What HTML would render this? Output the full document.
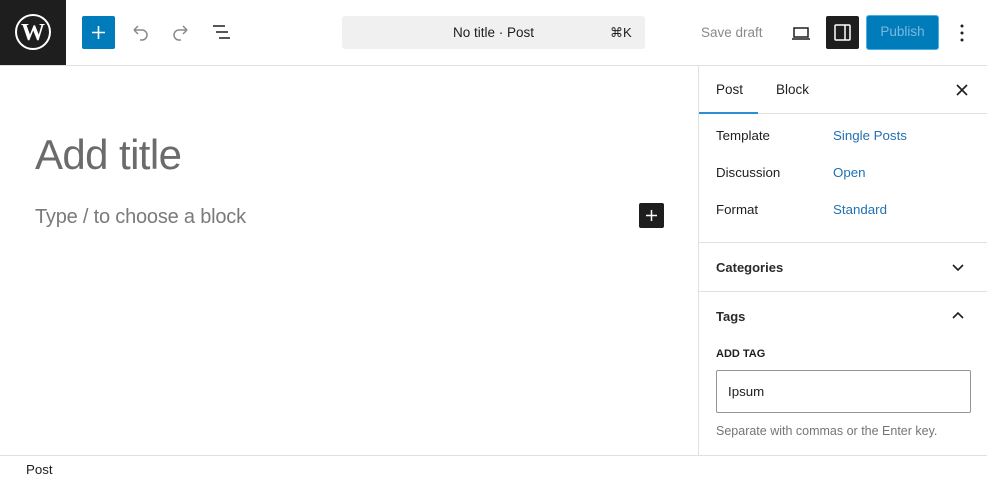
<!DOCTYPE html>
<html><head><style>
*{box-sizing:border-box;margin:0;padding:0}
body{width:987px;height:481px;overflow:hidden;background:#fff;font-family:"Liberation Sans",sans-serif;color:#1e1e1e;position:relative;font-size:13.3px}
.a{position:absolute}
.blue{color:#2271b1}
.m{font-weight:bold;color:#2a2a2a;font-size:13px}
</style></head><body>
<div class="a" style="left:0;top:0;width:66px;height:65px;background:#1e1e1e"></div>
<svg class="a" style="left:14px;top:13px" width="38" height="38" viewBox="0 0 38 38"><circle cx="19" cy="19" r="17" fill="none" stroke="#fff" stroke-width="2"/><text x="19" y="27" text-anchor="middle" font-family="Liberation Serif" font-weight="bold" font-size="24" fill="#fff">W</text></svg>
<div class="a" style="left:0;top:65px;width:987px;height:1px;background:#e0e0e0"></div>
<div class="a" style="left:82px;top:16px;width:33px;height:33px;background:#007cba;border-radius:2px"></div>
<svg class="a" style="left:82px;top:16px" width="33" height="33"><path d="M16.5 10v13M10 16.5h13" stroke="#fff" stroke-width="1.6"/></svg>
<svg class="a" style="left:128px;top:22px" width="24" height="22"><path d="M6 8h8a5 5 0 0 1 0 10h-2M6 8l4-4M6 8l4 4" fill="none" stroke="#8a8a8a" stroke-width="1.5"/></svg>
<svg class="a" style="left:169px;top:22px" width="24" height="22"><path d="M18 8h-8a5 5 0 0 0 0 10h2M18 8l-4-4M18 8l-4 4" fill="none" stroke="#8a8a8a" stroke-width="1.5"/></svg>
<svg class="a" style="left:211px;top:24px" width="24" height="18"><path d="M2 2h12M5 8h12M8 14h11" stroke="#1e1e1e" stroke-width="1.6"/></svg>
<div class="a" style="left:342px;top:16px;width:303px;height:33px;background:#f0f0f0;border-radius:3px"></div>
<div class="a" style="left:342px;top:25px;width:303px;text-align:center;font-size:13.5px">No title · Post</div>
<div class="a" style="left:610px;top:25px;font-size:13px">⌘K</div>
<div class="a" style="left:701px;top:25px;color:#8a8a8a;font-size:13.5px">Save draft</div>
<svg class="a" style="left:789px;top:22px" width="24" height="22"><path d="M5 6h14v9H5zM3 17h18" fill="none" stroke="#1e1e1e" stroke-width="1.5"/></svg>
<div class="a" style="left:826px;top:16px;width:33px;height:33px;background:#1e1e1e;border-radius:2px"></div>
<svg class="a" style="left:826px;top:16px" width="33" height="33"><rect x="9" y="9" width="15" height="15" rx="1" fill="none" stroke="#fff" stroke-width="1.5"/><path d="M19 9v15" stroke="#fff" stroke-width="1.5"/></svg>
<div class="a" style="left:866px;top:15px;width:73px;height:35px;background:#007cba;border:1.5px solid #4ab0e6;border-radius:3px;color:#7cb9dd;text-align:center;line-height:32px;font-size:13.5px">Publish</div>
<svg class="a" style="left:952px;top:22px" width="20" height="22"><circle cx="10" cy="4" r="1.5" fill="#1e1e1e"/><circle cx="10" cy="11" r="1.5" fill="#1e1e1e"/><circle cx="10" cy="18" r="1.5" fill="#1e1e1e"/></svg>
<div class="a" style="left:35px;top:131px;font-size:42px;color:#6b6b6b;letter-spacing:-0.6px">Add title</div>
<div class="a" style="left:35px;top:206px;font-size:20px;color:#7a7a7a;letter-spacing:-0.2px">Type / to choose a block</div>
<div class="a" style="left:639px;top:203px;width:25px;height:25px;background:#1e1e1e;border-radius:2px"></div>
<svg class="a" style="left:639px;top:203px" width="25" height="25"><path d="M12.5 7v11M7 12.5h11" stroke="#fff" stroke-width="1.5"/></svg>
<div class="a" style="left:698px;top:66px;width:1px;height:390px;background:#e0e0e0"></div>
<div class="a" style="left:716px;top:82px;font-size:13.5px">Post</div>
<div class="a" style="left:776px;top:82px;font-size:13.5px">Block</div>
<svg class="a" style="left:955px;top:83px" width="14" height="14"><path d="M2 2l10 10M12 2L2 12" stroke="#1e1e1e" stroke-width="1.6"/></svg>
<div class="a" style="left:699px;top:113px;width:288px;height:1px;background:#e0e0e0"></div>
<div class="a" style="left:699px;top:112px;width:59px;height:2px;background:#2a8fd4"></div>
<div class="a" style="left:716px;top:128px">Template</div><div class="a blue" style="left:833px;top:128px">Single Posts</div>
<div class="a" style="left:716px;top:165px">Discussion</div><div class="a blue" style="left:833px;top:165px">Open</div>
<div class="a" style="left:716px;top:202px">Format</div><div class="a blue" style="left:833px;top:202px">Standard</div>
<div class="a" style="left:699px;top:242px;width:288px;height:1px;background:#e0e0e0"></div>
<div class="a m" style="left:716px;top:260px">Categories</div>
<svg class="a" style="left:950px;top:262px" width="16" height="12"><path d="M3 3l5 5 5-5" fill="none" stroke="#1e1e1e" stroke-width="1.6"/></svg>
<div class="a" style="left:699px;top:291px;width:288px;height:1px;background:#e0e0e0"></div>
<div class="a m" style="left:716px;top:309px">Tags</div>
<svg class="a" style="left:950px;top:310px" width="16" height="12"><path d="M3 8l5-5 5 5" fill="none" stroke="#1e1e1e" stroke-width="1.6"/></svg>
<div class="a" style="left:716px;top:348px;font-size:11px;font-weight:bold">ADD TAG</div>
<div class="a" style="left:716px;top:370px;width:255px;height:43px;border:1px solid #949494;border-radius:2px"></div>
<div class="a" style="left:728px;top:384px">Ipsum</div>
<div class="a" style="left:716px;top:424px;font-size:12.5px;color:#757575">Separate with commas or the Enter key.</div>
<div class="a" style="left:0;top:455px;width:987px;height:1px;background:#e0e0e0"></div>
<div class="a" style="left:26px;top:462px">Post</div>
</body></html>
